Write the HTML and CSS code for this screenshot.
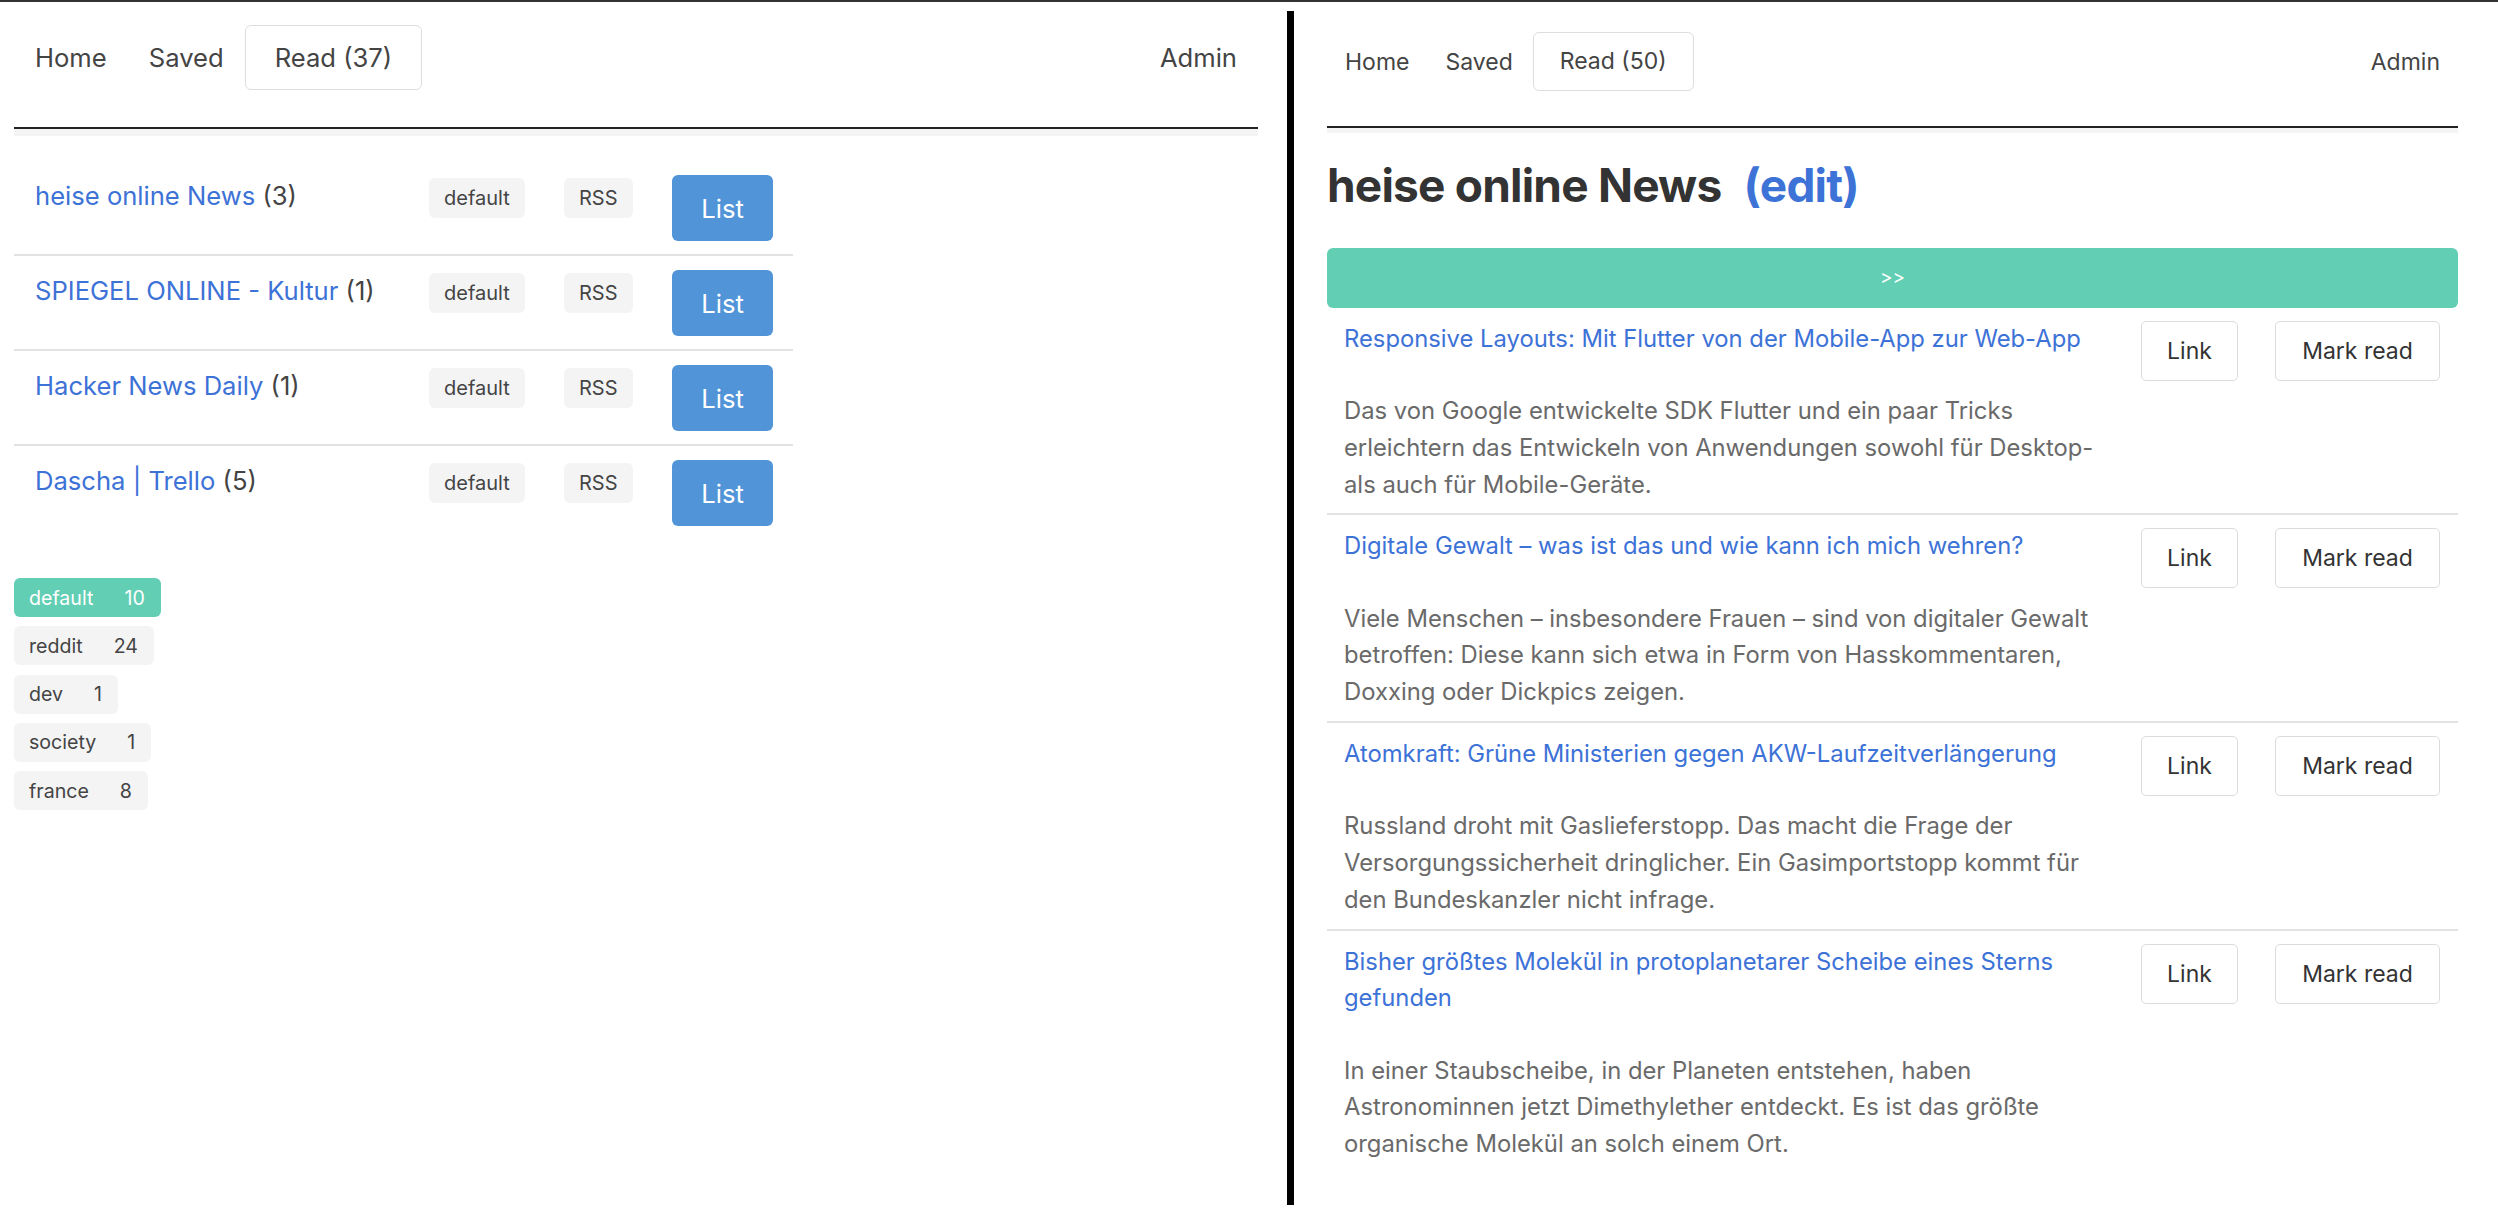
FILE: index.html
```html
<!DOCTYPE html>
<html lang="de">
<head>
<meta charset="utf-8">
<title>Feeds</title>
<link rel="stylesheet" href="styles.css">
</head>
<body>
<div class="screen">
  <section class="pane pane-left">
    <nav class="nav nav-left">
      <div class="nav-links">
        <a class="nav-item">Home</a>
        <a class="nav-item">Saved</a>
        <a class="nav-item nav-active">Read (37)</a>
      </div>
      <a class="nav-item">Admin</a>
    </nav>
    <div class="nav-shade"></div>

    <table class="feeds">
      <colgroup>
        <col class="c-title"><col class="c-tag"><col class="c-type"><col class="c-btn">
      </colgroup>
      <tr>
        <td class="feed-name"><a class="link">heise online News</a> (3)</td>
        <td><span class="tag">default</span></td>
        <td><span class="tag">RSS</span></td>
        <td><button class="btn-list">List</button></td>
      </tr>
      <tr>
        <td class="feed-name"><a class="link">SPIEGEL ONLINE - Kultur</a> (1)</td>
        <td><span class="tag">default</span></td>
        <td><span class="tag">RSS</span></td>
        <td><button class="btn-list">List</button></td>
      </tr>
      <tr>
        <td class="feed-name"><a class="link">Hacker News Daily</a> (1)</td>
        <td><span class="tag">default</span></td>
        <td><span class="tag">RSS</span></td>
        <td><button class="btn-list">List</button></td>
      </tr>
      <tr>
        <td class="feed-name"><a class="link">Dascha | Trello</a> (5)</td>
        <td><span class="tag">default</span></td>
        <td><span class="tag">RSS</span></td>
        <td><button class="btn-list">List</button></td>
      </tr>
    </table>

    <div class="chips">
      <div class="chip chip-active"><span class="chip-name">default</span><span>10</span></div>
      <div class="chip"><span class="chip-name">reddit</span><span>24</span></div>
      <div class="chip"><span class="chip-name">dev</span><span>1</span></div>
      <div class="chip"><span class="chip-name">society</span><span>1</span></div>
      <div class="chip"><span class="chip-name">france</span><span>8</span></div>
    </div>
  </section>

  <div class="divider"></div>

  <section class="pane pane-right">
    <nav class="nav nav-right">
      <div class="nav-links">
        <a class="nav-item">Home</a>
        <a class="nav-item">Saved</a>
        <a class="nav-item nav-active">Read (50)</a>
      </div>
      <a class="nav-item">Admin</a>
    </nav>
    <div class="nav-shade nav-shade-r"></div>

    <h1 class="feed-title">heise online News <a class="edit">(edit)</a></h1>

    <button class="next-bar">&gt;&gt;</button>

    <article class="item">
      <div class="item-text">
        <a class="item-title">Responsive Layouts: Mit Flutter von der Mobile-App zur Web-App</a>
        <p class="item-desc">Das von Google entwickelte SDK Flutter und ein paar Tricks<br>erleichtern das Entwickeln von Anwendungen sowohl für Desktop-<br>als auch für Mobile-Geräte.</p>
      </div>
      <button class="btn-out btn-link">Link</button>
      <button class="btn-out btn-mark">Mark read</button>
    </article>

    <article class="item">
      <div class="item-text">
        <a class="item-title">Digitale Gewalt – was ist das und wie kann ich mich wehren?</a>
        <p class="item-desc">Viele Menschen – insbesondere Frauen – sind von digitaler Gewalt<br>betroffen: Diese kann sich etwa in Form von Hasskommentaren,<br>Doxxing oder Dickpics zeigen.</p>
      </div>
      <button class="btn-out btn-link">Link</button>
      <button class="btn-out btn-mark">Mark read</button>
    </article>

    <article class="item">
      <div class="item-text">
        <a class="item-title">Atomkraft: Grüne Ministerien gegen AKW-Laufzeitverlängerung</a>
        <p class="item-desc">Russland droht mit Gaslieferstopp. Das macht die Frage der<br>Versorgungssicherheit dringlicher. Ein Gasimportstopp kommt für<br>den Bundeskanzler nicht infrage.</p>
      </div>
      <button class="btn-out btn-link">Link</button>
      <button class="btn-out btn-mark">Mark read</button>
    </article>

    <article class="item">
      <div class="item-text">
        <a class="item-title">Bisher größtes Molekül in protoplanetarer Scheibe eines Sterns<br>gefunden</a>
        <p class="item-desc">In einer Staubscheibe, in der Planeten entstehen, haben<br>Astronominnen jetzt Dimethylether entdeckt. Es ist das größte<br>organische Molekül an solch einem Ort.</p>
      </div>
      <button class="btn-out btn-link">Link</button>
      <button class="btn-out btn-mark">Mark read</button>
    </article>
  </section>
</div>
</body>
</html>
```

FILE: styles.css
```css
html, body {
  margin: 0;
  padding: 0;
  background: #fff;
  overflow: hidden;
}

body {
  font-family: Inter, "Liberation Sans", sans-serif;
  color: #444;
}

.screen {
  display: flex;
  height: 1212px;
  border-top: 2px solid #333;
}

.pane {
  box-sizing: border-box;
}

/* ---------- left pane ---------- */
.pane-left {
  width: 1287px;
  padding: 0 29px 0 14px;
  font-size: 25.6px;
}

.nav {
  display: flex;
  align-items: center;
  justify-content: space-between;
  border-bottom: 2px solid #222;
}

.nav-links {
  display: flex;
  align-items: center;
}

.nav-item {
  color: #444;
  text-decoration: none;
}

.nav-left {
  height: 111px;
  padding-bottom: 14px;
}

.nav-left .nav-item {
  padding: 0 21px;
}

.nav-left .nav-active {
  height: 63px;
  line-height: 63px;
  padding: 0 29px;
  border: 1px solid #dedede;
  border-radius: 6px;
}

.nav-shade {
  height: 7px;
  background: #f4f4f4;
}

.feeds {
  margin-top: 25px;
  width: 779px;
  border-collapse: collapse;
  table-layout: fixed;
}

.c-title { width: 395px; }
.c-tag { width: 135px; }
.c-type { width: 108px; }
.c-btn { width: 141px; }

.feeds td {
  padding: 14px 20px 13px;
  vertical-align: top;
  border-bottom: 2px solid #e2e2e2;
  line-height: 38.4px;
}

.feeds tr:last-child td {
  border-bottom: none;
}

.feeds td.feed-name {
  padding-top: 16px;
  padding-left: 21px;
  color: #444;
  white-space: nowrap;
}

.link {
  color: #3d72d7;
  text-decoration: none;
}

.tag {
  display: inline-block;
  margin-top: 3px;
  height: 40px;
  line-height: 40px;
  padding: 0 15px;
  font-size: 20px;
  color: #444;
  background: #f4f4f4;
  border-radius: 6px;
  vertical-align: top;
}

.btn-list {
  display: block;
  width: 101px;
  height: 66px;
  border: none;
  border-radius: 6px;
  background: #5195d8;
  color: #fff;
  font-family: inherit;
  font-size: 25.6px;
  padding: 0;
}

.chips {
  margin-top: 39px;
  display: flex;
  flex-direction: column;
  align-items: flex-start;
  gap: 9.3px;
}

.chip {
  display: flex;
  align-items: center;
  height: 39px;
  padding: 0 16px 0 15px;
  font-size: 19.6px;
  color: #444;
  background: #f4f4f4;
  border-radius: 6px;
}

.chip-active {
  background: #62ceb3;
  color: #fff;
}

.chip-name {
  margin-right: 31px;
}

/* ---------- divider ---------- */
.divider {
  width: 7px;
  margin: 9px 0 9px;
  background: #000;
}

/* ---------- right pane ---------- */
.pane-right {
  flex: 1;
  padding: 0 40px 0 33px;
  font-size: 23px;
}

.nav-right {
  height: 119px;
  padding-bottom: 5px;
}

.nav-right .nav-item {
  padding: 0 18px;
}

.nav-right .nav-active {
  height: 57px;
  line-height: 57px;
  padding: 0 26px;
  margin-left: 2px;
  border: 1px solid #dedede;
  border-radius: 6px;
}

.nav-shade-r {
  height: 5px;
}

.feed-title {
  margin: 24.7px 0 35px;
  font-size: 46px;
  line-height: 55.2px;
  font-weight: 700;
  color: #333;
  letter-spacing: -0.8px;
}

.edit {
  margin-left: 12px;
  color: #3d72d7;
  text-decoration: none;
}

.next-bar {
  display: block;
  width: 100%;
  height: 60px;
  border: none;
  border-radius: 6px;
  background: #62ceb3;
  color: #fff;
  font-family: inherit;
  font-size: 19px;
  padding: 0;
}

.item {
  display: flex;
  align-items: flex-start;
  padding: 13px 18px 10px 17px;
  border-bottom: 2px solid #e2e2e2;
  line-height: 36.8px;
  font-size: 23.8px;
}

.item:last-child {
  border-bottom: none;
}

.item-text {
  flex: 1;
  min-width: 0;
  padding-right: 16px;
  white-space: nowrap;
}

.item-title {
  display: block;
  color: #3d72d7;
  text-decoration: none;
}

.item-desc {
  margin: 35.4px 0 0;
  color: #6a6a6a;
}

.btn-out {
  height: 60px;
  padding: 0 25px;
  border: 1px solid #dcdcdc;
  border-radius: 5px;
  background: #fff;
  color: #333;
  font-family: inherit;
  font-size: 23px;
  flex: none;
}

.btn-link {
  width: 97px;
}

.btn-mark {
  width: 165px;
  margin-left: 37px;
}
```
